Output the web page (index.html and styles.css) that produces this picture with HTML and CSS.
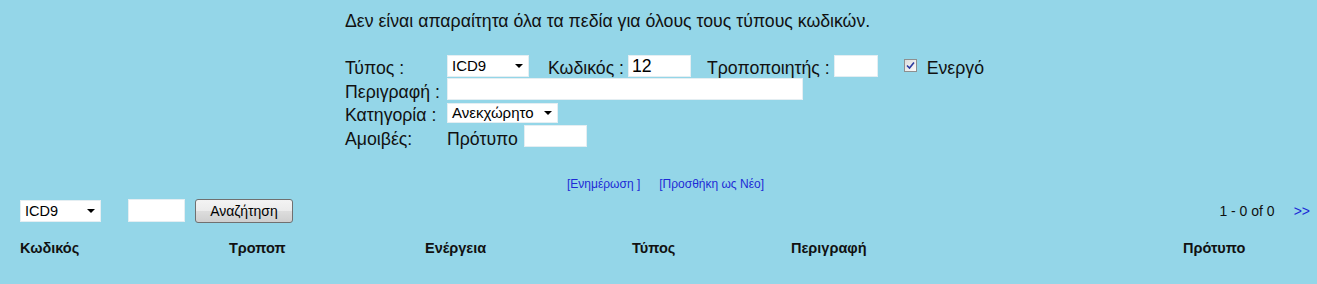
FILE: index.html
```html
<!DOCTYPE html>
<html lang="el">
<head>
<meta charset="utf-8">
<title>Κωδικοί</title>
<link rel="stylesheet" href="styles.css">
</head>
<body>
<div class="page">
  <div class="editor">
    <p class="note">Δεν είναι απαραίτητα όλα τα πεδία για όλους τους τύπους κωδικών.</p>
    <div class="form">
      <div class="row">
        <span class="lbl">Τύπος :</span>
        <div class="fields">
          <span class="sel w82">ICD9<i class="arrow"></i></span>
          <span class="txt lbl-k">Κωδικός :</span>
          <span class="inp w63">12</span>
          <span class="txt lbl-t">Τροποποιητής :</span>
          <span class="inp w44"></span>
          <span class="chk"><svg viewBox="0 0 9 9" width="9" height="9"><path d="M1 4.5 L3.5 7 L8 1.5" fill="none" stroke="#2a3aa0" stroke-width="1.6"/></svg></span>
          <span class="txt">Ενεργό</span>
        </div>
      </div>
      <div class="row">
        <span class="lbl">Περιγραφή :</span>
        <div class="fields"><span class="inp w356"></span></div>
      </div>
      <div class="row">
        <span class="lbl">Κατηγορία :</span>
        <div class="fields"><span class="sel w111 short">Ανεκχώρητο<i class="arrow"></i></span></div>
      </div>
      <div class="row">
        <span class="lbl">Αμοιβές:</span>
        <div class="fields"><span class="txt">Πρότυπο</span><span class="inp w63 gap6"></span></div>
      </div>
    </div>
    <div class="links">
      <a href="#">[Ενημέρωση ]</a>
      <a href="#">[Προσθήκη ως Νέο]</a>
    </div>
  </div>

  <div class="searchbar">
    <div class="search">
      <span class="sel w81 small">ICD9<i class="arrow"></i></span>
      <span class="inp w57"></span>
      <button class="btn" type="button">Αναζήτηση</button>
    </div>
    <div class="pager">
      <span>1 - 0 of 0</span>
      <a href="#">&gt;&gt;</a>
    </div>
  </div>

  <div class="thead">
    <span>Κωδικός</span>
    <span>Τροποπ</span>
    <span>Ενέργεια</span>
    <span>Τύπος</span>
    <span>Περιγραφή</span>
    <span>Πρότυπο</span>
  </div>
</div>
</body>
</html>
```
FILE: styles.css
```css
html, body {
  margin: 0;
  padding: 0;
  background: #94d6e8;
}
body {
  font-family: "Liberation Sans", Arial, sans-serif;
  color: #111;
  width: 1317px;
  height: 284px;
  overflow: hidden;
}
.page {
  display: flex;
  flex-direction: column;
}
.editor {
  padding-left: 345px;
  display: flex;
  flex-direction: column;
}
.note {
  margin: 0;
  padding-top: 11px;
  font-size: 17.7px;
  line-height: 20px;
  height: 20px;
}
.form {
  margin-top: 23px;
  display: flex;
  flex-direction: column;
}
.row {
  display: flex;
  align-items: center;
  height: 23.5px;
  font-size: 17.7px;
}
.lbl, .txt {
  line-height: 20px;
  padding-top: 5px;
}
.lbl {
  width: 102px;
  flex: none;
}
.fields {
  display: flex;
  align-items: center;
}
.txt { white-space: nowrap; }
.lbl-k { margin-left: 19px; margin-right: 4px; }
.lbl-t { margin-left: 16px; margin-right: 4px; }
.sel {
  position: relative;
  box-sizing: border-box;
  height: 22px;
  background: #fff;
  border: 1px solid #e4eef2;
  font-size: 15px;
  line-height: 20px;
  padding-left: 4px;
  color: #000;
}
.sel.short { height: 20px; line-height: 18px; }
.sel.small { font-size: 14.5px; }
.arrow {
  position: absolute;
  right: 5px;
  top: 50%;
  margin-top: -2px;
  width: 0;
  height: 0;
  border-left: 4px solid transparent;
  border-right: 4px solid transparent;
  border-top: 4px solid #000;
}
.inp {
  box-sizing: border-box;
  height: 22px;
  background: #fff;
  border: 1px solid #e4eef2;
  font-size: 17.7px;
  line-height: 19px;
  padding: 1px 0 0 3px;
  color: #000;
}
.w82 { width: 82px; }
.w81 { width: 81px; }
.w111 { width: 111px; }
.w63 { width: 63px; }
.w44 { width: 44px; }
.w57 { width: 57px; }
.w356 { width: 356px; }
.gap6 { margin-left: 6px; }
.chk {
  box-sizing: border-box;
  width: 13px;
  height: 13px;
  margin-left: 26px;
  margin-right: 10px;
  border: 1px solid #8e8f8f;
  background: linear-gradient(135deg, #dcdcdc, #fbfbfb);
  display: flex;
  align-items: center;
  justify-content: center;
}
.links {
  margin-top: 29px;
  padding-left: 222px;
  display: flex;
  gap: 19px;
  font-size: 12px;
  line-height: 14px;
}
.links a {
  color: #1d2bd6;
  text-decoration: none;
}
.searchbar {
  margin-top: 7px;
  display: flex;
  justify-content: space-between;
  align-items: center;
  padding: 0 7px 0 20px;
  height: 25px;
}
.search {
  display: flex;
  align-items: center;
}
.search .inp { margin-left: 27px; height: 23px; }
.btn {
  margin-left: 10px;
  box-sizing: border-box;
  width: 98px;
  height: 24px;
  font-family: "Liberation Sans", Arial, sans-serif;
  font-size: 14px;
  color: #000;
  border: 1px solid #707070;
  border-radius: 3px;
  background: linear-gradient(#f3f3f3, #ebebeb 50%, #dddddd 50%, #cfcfcf);
  padding: 0;
}
.pager {
  display: flex;
  align-items: center;
  gap: 19px;
  font-size: 14px;
}
.pager a {
  color: #1d2bd6;
  text-decoration: none;
}
.thead {
  margin-top: 17px;
  padding-left: 20px;
  display: grid;
  grid-template-columns: 209px 196px 207px 159px 392px 1fr;
  font-size: 14.5px;
  font-weight: bold;
  line-height: 16px;
}
```
